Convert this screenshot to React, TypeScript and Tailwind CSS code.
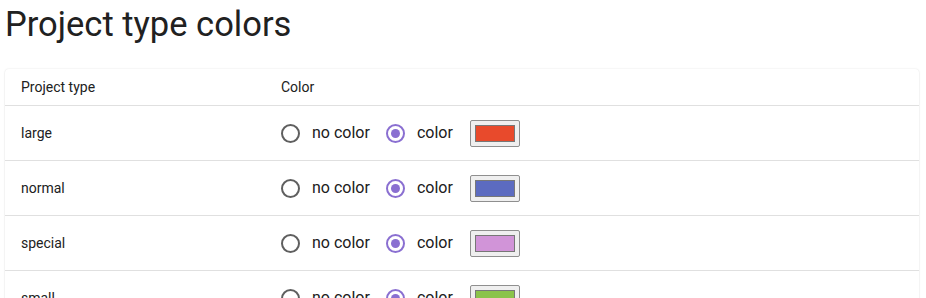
const rows = [
  { name: 'large', color: '#e84a2c' },
  { name: 'normal', color: '#5c6bc0' },
  { name: 'special', color: '#d194d8' },
  { name: 'small', color: '#8bc34a' },
];

function Radio({ checked, label }: { checked?: boolean; label: string }) {
  return (
    <label className="flex items-center">
      <span
        className={
          checked
            ? 'flex h-[19px] w-[19px] items-center justify-center rounded-full border-2 border-[#8a6fd1]'
            : 'flex h-[19px] w-[19px] items-center justify-center rounded-full border-2 border-[#5f5f5f]'
        }
      >
        {checked && <span className="h-[9px] w-[9px] rounded-full bg-[#8a6fd1]" />}
      </span>
      <span className="ml-3 text-[16px] text-[#202020]">{label}</span>
    </label>
  );
}

export default function App() {
  return (
    <div className="min-h-[298px] bg-white font-['Roboto',sans-serif] text-[#212121]">
      <h1 className="pl-[5px] pt-[4px] text-[34.5px] leading-[40px] font-normal">Project type colors</h1>

      <div className="ml-[5px] mt-[25px] w-[914px] rounded-[4px] bg-white shadow-[0_0_2px_rgba(0,0,0,0.12),0_1px_2px_rgba(0,0,0,0.06)]">
        <div className="flex h-[37px] items-center border-b border-[#e0e0e0] text-[14px]">
          <div className="w-[276px] pl-4">Project type</div>
          <div>Color</div>
        </div>
        {rows.map(row => (
          <div key={row.name} className="flex h-[55px] items-center border-b border-[#e0e0e0] text-[14px]">
            <div className="w-[276px] pl-4">{row.name}</div>
            <div className="flex items-center">
              <Radio label="no color" />
              <div className="ml-4">
                <Radio checked label="color" />
              </div>
              <div className="ml-[17px] flex h-[27px] w-[50px] items-center justify-center rounded-[2px] border border-[#8f8f8f] bg-[#efefef]">
                <div className="h-[17px] w-[40px] border border-[#777]" style={{ backgroundColor: row.color }} />
              </div>
            </div>
          </div>
        ))}
      </div>
    </div>
  );
}
